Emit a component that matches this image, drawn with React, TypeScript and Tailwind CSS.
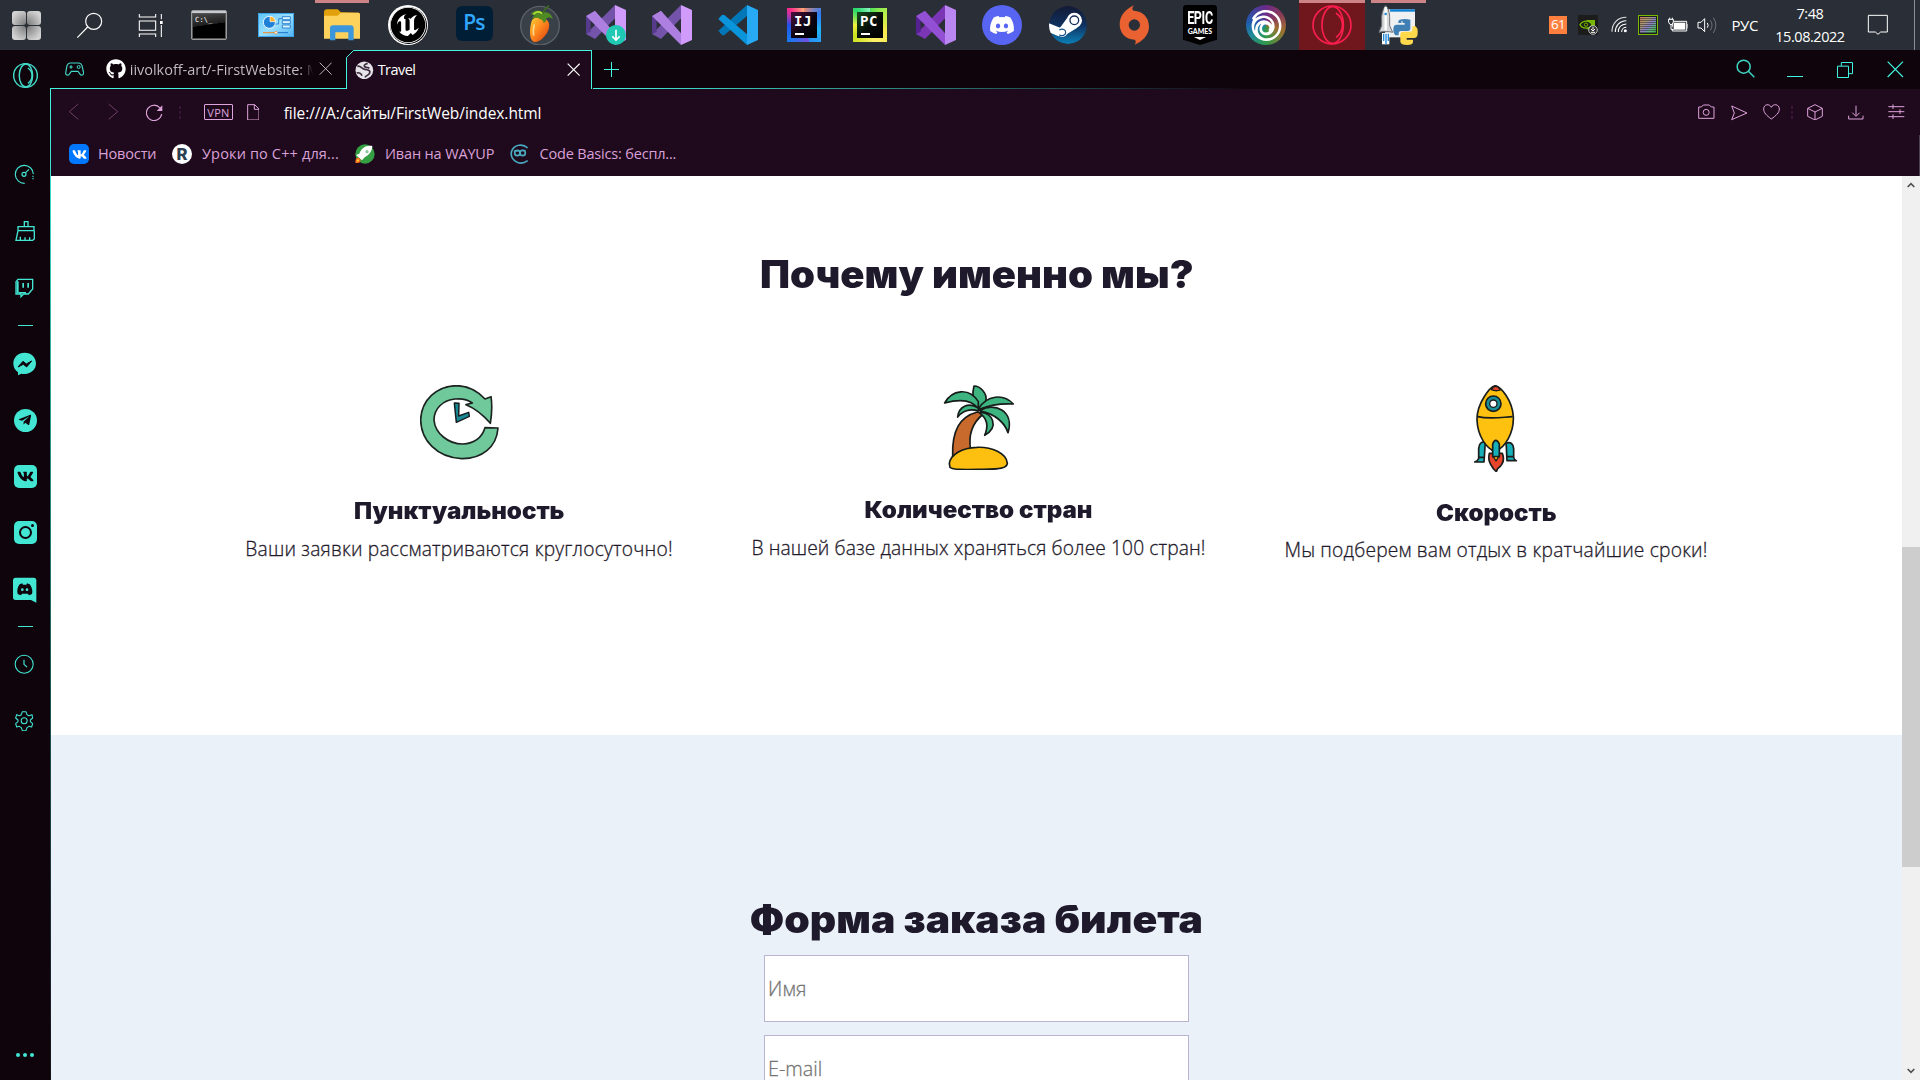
import React from 'react';
import { FaDiscord, FaGithub, FaVk, FaTelegramPlane } from 'react-icons/fa';
import { SiUnrealengine, SiUbisoft } from 'react-icons/si';

type DrawProps = { x: number; y: number; w: number; h: number; className?: string; children: React.ReactNode };

/** Line drawing on a grid of three units per pixel. */
function Draw({ x, y, w, h, className = '', children }: DrawProps) {
  return (
    <svg width={w / 3} height={h / 3} viewBox={`${x} ${y} ${w} ${h}`} fill="none" className={`shrink-0 ${className}`}>
      {children}
    </svg>
  );
}

function Cell({ className = '', children }: { className?: string; children: React.ReactNode }) {
  return <div className={`relative flex h-full w-[66px] shrink-0 items-center justify-center ${className}`}>{children}</div>;
}

function RunningBar({ className }: { className: string }) {
  return <span className={`absolute top-0 h-[3px] bg-[#cc8486] ${className}`} />;
}

function VisualStudio({ band, back, side, dark }: { band: string; back: string; side: string; dark: string }) {
  return (
    <Draw x={0} y={0} w={120} h={120}>
      <polygon points="0,87 27,102 87,40 87,0" fill={back} />
      <polygon points="0,33 14,42 14,80 0,87" fill={dark} />
      <polygon points="0,33 27,17 87,85 87,120" fill={band} />
      <polygon points="87,0 120,15 120,105 87,120" fill={side} />
    </Draw>
  );
}

function OperaGlyph({ size, color, width }: { size: number; color: string; width: number }) {
  return (
    <svg width={size} height={size} viewBox="0 0 120 120" fill="none" stroke={color} strokeWidth={width}>
      <circle cx="60" cy="60" r="57" />
      <ellipse cx="62" cy="60" rx="32" ry="55" />
      <path d="M72 24c26 18 26 54 0 74" />
    </svg>
  );
}

function JetBrains({ label, kind }: { label: string; kind: 'ij' | 'pc' }) {
  return (
    <div
      className={`flex h-[34px] w-[34px] p-[4px] ${
        kind === 'ij'
          ? 'bg-[conic-gradient(from_0deg,#f08a70,#2f7bf0_15%,#21b6f5_30%,#2a8cf5_45%,#7a4ce0_40%,#1a78f0_62%,#2350e8_75%,#fb2a8c_88%,#ffb07a)]'
          : 'bg-[conic-gradient(from_0deg,#4be05a,#b8f04a_15%,#f5ea4a_30%,#fdf06a_45%,#c9e020_65%,#f3f03c_75%,#25d86a_88%,#8af5c0)]'
      }`}
    >
      <div
        className={`flex flex-1 flex-col pl-[3px] pt-[1px] font-['DejaVu_Sans_Mono',monospace] text-[14px] font-bold leading-[16px] tracking-[0.6px] text-white ${
          kind === 'ij' ? 'bg-[linear-gradient(135deg,#4a0f3c,#0a0412_55%,#000)]' : 'bg-[linear-gradient(135deg,#174a1c,#060c06_55%,#000)]'
        }`}
      >
        <span>{label}</span>
        <span className="ml-px mt-[4px] h-[2px] w-[9px] bg-white" />
      </div>
    </div>
  );
}

function Taskbar() {
  return (
    <header className="flex h-[50px] w-full shrink-0 items-stretch bg-[#2a2f37] font-['Open_Sans',sans-serif] text-white">
      <Cell className="w-[53px]!">
        <div className="grid h-[29px] w-[29px] grid-cols-2 gap-px">
          <span className="rounded-[3px] bg-[radial-gradient(circle_at_100%_100%,#777_0%,#d2d2d2_80%)]" />
          <span className="rounded-[3px] bg-[radial-gradient(circle_at_0%_100%,#777_0%,#d2d2d2_80%)]" />
          <span className="rounded-[3px] bg-[radial-gradient(circle_at_100%_0%,#777_0%,#d2d2d2_80%)]" />
          <span className="rounded-[3px] bg-[radial-gradient(circle_at_0%_0%,#777_0%,#d2d2d2_80%)]" />
        </div>
      </Cell>
      <Cell className="w-[73px]!">
        <Draw x={228} y={33} w={81} h={81}>
          <g stroke="#fff" strokeWidth="3.5">
            <circle cx="281" cy="61" r="24" />
            <path d="M263 78 232 110" />
          </g>
        </Draw>
      </Cell>
      <Cell className="w-[50px]!">
        <Draw x={411} y={36} w={78} h={75}>
          <g stroke="#fff" strokeWidth="3.2">
            <path d="M415 39v9h49v-9M415 108v-9h49v9M415 60h49v28h-49zM481 39v16M481 72v36" />
            <path d="M477 60h8v9h-8z" fill="#fff" stroke="none" />
          </g>
        </Draw>
      </Cell>
      <Cell className="w-[67px]! pr-px">
        <div className="h-[30px] w-[36px] rounded-[2px] border border-[#9a9a9a] bg-[#c6cbd4] pt-[2px]">
          <div className="relative h-[26px] w-full overflow-hidden border border-[#555] bg-[linear-gradient(172deg,#4a4a4a,#1d1d1d_45%,#000_46%)]">
            <span className="absolute left-[2px] top-[2px] whitespace-nowrap font-['DejaVu_Sans_Mono',monospace] text-[7px] leading-[8px] tracking-[0.2px] text-white">C:\_</span>
          </div>
        </div>
      </Cell>
      <Cell>
        <Draw x={774} y={39} w={108} h={72}>
          <defs>
            <linearGradient id="panel" x1="0" y1="0" x2="1" y2="1">
              <stop stopColor="#5cc4f8" />
              <stop offset=".5" stopColor="#9be0ff" />
              <stop offset="1" stopColor="#4db2f2" />
            </linearGradient>
          </defs>
          <path d="M774 39h108v72H774z" fill="url(#panel)" />
          <path d="M775.500 40.500h105v69h-105z" stroke="#3aa5ea" strokeWidth="3" />
          <circle cx="808" cy="67" r="18" fill="#1d7fd6" stroke="#e8f8ff" strokeWidth="3" />
          <path d="M810 65V49a16 16 0 0 1 16 16z" fill="#ffb02e" stroke="#fff" strokeWidth="2" />
          <path d="M826 72h10V56h10" stroke="#1976c8" strokeWidth="2.500" />
          <g fill="#d8f3ff" stroke="#1976c8" strokeWidth="2.500">
            <path d="M847 50h24v9h-24zM847 62h24v9h-24zM847 75h24v9h-24z" />
          </g>
          <path d="M789 98h36" stroke="#f08a24" strokeWidth="3" />
          <path d="M832 98h32" stroke="#1976c8" strokeWidth="3" />
          <circle cx="828" cy="98" r="4" fill="#fff" stroke="#f08a24" strokeWidth="2" />
        </Draw>
      </Cell>
      <Cell>
        <RunningBar className="inset-x-[6px]" />
        <Draw x={972} y={26} w={108} h={95}>
          <path d="M972 36c0-6 3-9 9-9h32l10 9 52 1c4 0 5 3 5 6v20H972z" fill="#e2a10c" />
          <path d="M972 46h41l10-9h52c4 0 5 3 5 6v72H972z" fill="#fdd25c" />
          <path d="M990 120V84c0-6 3-9 9-9h53c6 0 9 3 9 9v36h-16V96h-39v24z" fill="#3c96dc" />
        </Draw>
      </Cell>
      <Cell>
        <div className="flex h-[40px] w-[40px] items-center justify-center rounded-full bg-white">
          <div className="flex h-[37px] w-[37px] items-center justify-center rounded-full bg-black">
            <SiUnrealengine size={36} />
          </div>
        </div>
      </Cell>
      <Cell>
        <div className="mb-[3px] flex h-[35px] w-[37px] items-center justify-center rounded-[6px] bg-[#001e36] pb-[2px] text-[21px] font-semibold leading-none tracking-[-0.8px] text-[#31a8ff]">Ps</div>
      </Cell>
      <Cell>
        <Draw x={120} y={14} w={120} h={122}>
          <defs>
            <linearGradient id="fruit" x1="0" y1="0" x2="1" y2="1">
              <stop stopColor="#ffd23a" />
              <stop offset=".45" stopColor="#ff8a1e" />
              <stop offset="1" stopColor="#d83a10" />
            </linearGradient>
          </defs>
          <circle cx="180" cy="76" r="58" fill="#3a4047" stroke="#5a6067" strokeWidth="4" />
          <path d="M157 58c14-14 44-8 50 12 4 22-20 54-43 55-20-3-15-52-7-67z" fill="url(#fruit)" />
          <path d="M163 72c-3 12-4 24-2 34" stroke="#fff2b0" strokeWidth="5" opacity=".7" />
          <path d="M152 43c8-14 26-16 36-6 16-4 28 5 30 19-10-6-14-5-20 0 2 6-1 10-7 12-1-7-5-11-12-12-6-6-16-4-22 0 2-6 3-9 8-11-5-3-8-3-13-2z" fill="#4f8a22" />
          <path d="M160 42c10-10 20-8 28-2" stroke="#b6e03a" strokeWidth="5" />
          <path d="M188 40c4-10 10-18 19-24" stroke="#3b6e1e" strokeWidth="5" />
        </Draw>
      </Cell>
      <Cell>
        <VisualStudio band="#ad7fe0" back="#7453ab" side="#d09bfb" dark="#563a8c" />
        <span className="absolute left-[33px] top-[25px] flex h-[20px] w-[20px] items-center justify-center rounded-full bg-[#20c9b4]">
          <Draw x={0} y={0} w={36} h={42}>
            <path d="M18 5v30M7 25l11 11 11-11" stroke="#fff" strokeWidth="5" />
          </Draw>
        </span>
      </Cell>
      <Cell><VisualStudio band="#ad7fe0" back="#7453ab" side="#d09bfb" dark="#563a8c" /></Cell>
      <Cell>
        <Draw x={714} y={15} w={120} h={120}>
          <path d="m715 92 10 12q4 3 9 0l67-56V15z" fill="#0177b8" />
          <path d="m715 57 10-11q4-3 9 0l67 57v32z" fill="#0a94dc" />
          <path d="m801 15 33 15v90l-33 15z" fill="#27aaf3" />
        </Draw>
      </Cell>
      <Cell><JetBrains label="IJ" kind="ij" /></Cell>
      <Cell><JetBrains label="PC" kind="pc" /></Cell>
      <Cell><VisualStudio band="#9450d4" back="#7a36b4" side="#ba86f2" dark="#552090" /></Cell>
      <Cell>
        <div className="flex h-[40px] w-[40px] items-center justify-center rounded-full bg-[#5865f2]">
          <FaDiscord size={26} />
        </div>
      </Cell>
      <Cell>
        <Draw x={267} y={18} w={114} h={114}>
          <defs>
            <linearGradient id="steam" x1="0" y1="0" x2="0" y2="1">
              <stop stopColor="#131a35" />
              <stop offset=".5" stopColor="#10305e" />
              <stop offset="1" stopColor="#0b80b8" />
            </linearGradient>
            <clipPath id="steamDisc"><circle cx="324" cy="75" r="57" /></clipPath>
          </defs>
          <g clipPath="url(#steamDisc)">
            <circle cx="324" cy="75" r="57" fill="url(#steam)" />
            <path d="M262 68l38 15 22-30 30 30-32 20-24 6-34-14z" fill="#fff" />
            <circle cx="343" cy="61" r="23" fill="#fff" />
            <circle cx="343" cy="61" r="13" stroke="#152c58" strokeWidth="4" />
            <circle cx="307" cy="96" r="15" fill="#fff" />
            <path d="M298 90c10-6 20 0 19 8s-11 12-19 6" stroke="#14508a" strokeWidth="3.500" />
          </g>
        </Draw>
      </Cell>
      <Cell>
        <Draw x={477} y={14} w={92} h={121}>
          <path d="M522 15c-6 7-7 13-1 16 27 1 46 20 46 48 0 26-20 44-43 54 4-6 5-11 0-15-27 0-45-20-45-46 0-27 19-46 43-57z" fill="#ea6232" />
          <circle cx="523" cy="74" r="17" fill="#2a2f37" />
        </Draw>
      </Cell>
      <Cell>
        <div className="flex h-[40px] w-[34px] flex-col items-center rounded-t-[3px] bg-black pt-[4px] [clip-path:polygon(0_0,100%_0,100%_87%,50%_100%,0_87%)]">
          <span className="block h-[18px] scale-y-[1.45] font-['Roboto',sans-serif] text-[12.500px] font-bold leading-[18px] tracking-[-0.3px]">EPIC</span>
          <span className="block font-['Lato',sans-serif] text-[7px] font-black leading-[9px]">GAMES</span>
          <span className="mt-px h-[3px] w-[12px] bg-white [clip-path:polygon(0_0,100%_0,50%_100%)]" />
        </div>
      </Cell>
      <Cell>
        <div className="flex h-[40px] w-[40px] items-center justify-center rounded-full bg-[conic-gradient(#6a2a8a,#8a3a5a_15%,#a07030_30%,#2f9a48_50%,#1f8a9a_65%,#1f5ab0_78%,#6a2a8a)]">
          <SiUbisoft size={31} />
        </div>
      </Cell>
      <Cell className="bg-[#6f171c]">
        <RunningBar className="inset-x-0" />
        <OperaGlyph size={40} color="#fa1e4e" width={5} />
      </Cell>
      <Cell>
        <RunningBar className="left-[6px] w-[55px]" />
        <Draw x={1254} y={14} w={120} h={122}>
          <path d="M1275 27h90v84h-90z" fill="#eef0f2" />
          <path d="M1290 27h75v7h-75z" fill="#0f7fd4" />
          <path d="m1257 96 8-20V48c2-16 7-27 12-32 6 5 11 16 12 32v28l9 20-10-2h-22z" fill="#d4d6d8" stroke="#6c7074" strokeWidth="3" />
          <path d="M1277 20v70" stroke="#fff" strokeWidth="7" />
          <circle cx="1277" cy="41" r="4" fill="#2f8ad8" />
          <path d="M1266 98h22v34h-22z" fill="#fff" />
          <path d="M1271 100v22M1278 100v32M1285 100v22" stroke="#1f88d8" strokeWidth="4" />
          <path d="M1319 58q16-4 32 0v28q0 6-8 6h-20q-7 0-7 8v5h-10q-8-8-5-26 2-6 9-6h24v-5h-19v-6z" fill="#3f7fb4" />
          <path d="M1357 78h10q9 8 5 28-2 7-10 7h-22v5h19v6q0 10-18 10t-20-10v-21q0-9 8-9h21q7 0 7-8z" fill="#fed94c" />
          <circle cx="1326" cy="65" r="2.500" fill="#fff" />
        </Draw>
      </Cell>

      <div className="ml-auto flex h-full w-[371px] items-center">
        <div className="flex h-[18px] w-[18px] items-center justify-center bg-[#ff7f3f] text-[13.500px] leading-none tracking-[-0.8px]">61</div>
        <Draw x={414} y={45} w={60} h={60} className="ml-[11px]">
          <path d="M414 45h60v60h-60z" fill="#1c1c1c" />
          <path d="M440 60h25v28h-25z" fill="#76b900" />
          <path d="M420 74c10-14 28-14 36 0-8 14-28 14-36 0z" fill="#1c1c1c" stroke="#76b900" strokeWidth="4" />
          <circle cx="438" cy="74" r="5" stroke="#76b900" strokeWidth="3" />
          <circle cx="459" cy="90" r="13" fill="#333" stroke="#bdbdbd" strokeWidth="3" />
          <path d="M459 81v8M453 87l6 6 6-6M453 97h12" stroke="#fff" strokeWidth="3" />
        </Draw>
        <Draw x={511} y={51} w={49} h={52} className="ml-[12.500px]">
          <g stroke="#fff" strokeWidth="3.200">
            <path d="M514 98c0-25 17-43 43-43" opacity=".85" />
            <path d="M524 99c0-19 12-33 33-34" />
            <path d="M533 99c0-14 9-23 24-24" />
            <path d="M543 99c0-8 6-14 14-14" />
          </g>
          <circle cx="554" cy="95" r="4.500" fill="#fff" />
        </Draw>
        <div className="ml-[11px] h-[20px] w-[20px] border border-[#7ab800] bg-black/40 p-px">
          <div className="h-full w-full bg-[repeating-linear-gradient(#0000_0_1px,#2228_1px_2px),linear-gradient(135deg,#d07a60,#b09a70_30%,#8a80c8_55%,#5ac070_80%,#3fa040)]" />
        </div>
        <Draw x={683} y={51} w={62} h={48} className="ml-[10px]">
          <path d="M696 64h43v29h-43zM743 72v13" stroke="#fff" strokeWidth="3" />
          <path d="M700 68h35v21h-35z" fill="#fff" />
          <path d="M684 58h15v8q-2 8-7 8t-7-8zM688 53v6M696 53v6M692 72v16h8" stroke="#fff" strokeWidth="3" fill="#2a2f37" />
        </Draw>
        <Draw x={772} y={48} w={66} h={54} className="ml-[9px]">
          <path d="M775 67h9l11-11v39l-11-11h-9zM803 69q5 7 0 14" stroke="#fff" strokeWidth="3" />
          <path d="M812 61q10 14 0 30M821 53q15 22 0 46" stroke="#6e737a" strokeWidth="3" />
        </Draw>
        <span className="ml-[12px] w-[30px] text-[15px] leading-none tracking-[-0.400px]">РУС</span>
        <div className="ml-[9px] flex w-[79px] flex-col items-center text-[14.500px] leading-[23px] tracking-[-0.450px]">
          <span>7:48</span>
          <span>15.08.2022</span>
        </div>
        <Draw x={1284} y={42} w={66} h={66} className="ml-[18px]">
          <path d="M1288 46h57v50h-20l-8 7-8-7h-21z" stroke="#fff" strokeWidth="3" />
        </Draw>
        <span className="ml-auto mr-[5px] h-full w-px bg-[#8b8f95]" />
      </div>
    </header>
  );
}

function SideCell({ className = 'h-[56px]', children }: { className?: string; children: React.ReactNode }) {
  return <div className={`flex w-full shrink-0 items-center justify-center ${className}`}>{children}</div>;
}

function Sidebar() {
  return (
    <aside className="flex w-[50px] shrink-0 flex-col items-center bg-[#0f040c] text-[#42e6d3]">
      <SideCell className="mb-[46px] h-[50px] pl-px pt-px">
        <OperaGlyph size={25} color="#42d9c8" width={7} />
      </SideCell>
      <SideCell className="h-[56px] pr-px">
        <Draw x={43} y={43} w={62} h={62}>
          <g stroke="currentColor" strokeWidth="3.500">
            <path d="M75 101a27 27 0 1 1 26-28" />
            <path d="M100 78v12" strokeDasharray="4 3" />
            <circle cx="73" cy="74" r="6" />
            <path d="m78 69 10-10" />
          </g>
        </Draw>
      </SideCell>
      <SideCell className="h-[56px] pt-[2px]">
        <Draw x={45} y={210} w={62} h={66}>
          <path d="M73 230v-15h11v15M54 230h48v12H54zM54 242l-6 29h50l5-4v-25M61 260v11M75 262v9M89 262v9" stroke="currentColor" strokeWidth="4" />
        </Draw>
      </SideCell>
      <SideCell className="h-[58px] pt-px">
        <Draw x={47} y={382} w={58} h={60}>
          <path d="M56 386h44v29l-13 15H73l-8 8v-8H50v-37z" stroke="currentColor" strokeWidth="4" />
          <path d="M52 392h6v36h-6zM69 397h5v14h-5zM84 397h5v14h-5z" fill="currentColor" />
          <path d="M58 424h22v5H58z" fill="currentColor" />
        </Draw>
      </SideCell>
      <span className="mt-[9px] h-px w-[15px] bg-[#42e6d3]" />
      <SideCell className="mt-[10px] h-[56px]">
        <Draw x={40} y={606} w={70} h={70}>
          <path d="M75 608c20 0 34 14 34 32s-14 32-34 32c-4 0-7 0-10-1l-10 5v-9c-9-6-14-16-14-27 0-18 14-32 34-32z" fill="currentColor" />
          <path d="m55 651 15-17 10 8 16-9-15 18-10-8z" fill="#0f040c" stroke="#0f040c" strokeWidth="3" />
        </Draw>
      </SideCell>
      <SideCell className="h-[56px]">
        <div className="flex h-[23px] w-[23px] items-center justify-center rounded-full bg-[#42e6d3]">
          <FaTelegramPlane size={14} color="#0f040c" />
        </div>
      </SideCell>
      <SideCell className="h-[56px]">
        <div className="flex h-[23px] w-[23px] items-center justify-center rounded-[5px] bg-[#42e6d3]">
          <FaVk size={17} color="#0f040c" />
        </div>
      </SideCell>
      <SideCell className="h-[56px]">
        <div className="relative flex h-[23px] w-[23px] items-center justify-center rounded-[5px] bg-[#42e6d3]">
          <span className="h-[13px] w-[13px] rounded-full border-[2.500px] border-[#0f040c]" />
          <span className="absolute right-[3px] top-[3px] h-[3px] w-[3px] rounded-full bg-[#0f040c]" />
        </div>
      </SideCell>
      <SideCell className="h-[60px]">
        <Draw x={40} y={291} w={72} h={78}>
          <path d="M48 293h54q8 0 8 8v67l-16-8H48q-8 0-8-8v-51q0-8 8-8z" fill="currentColor" />
          <path d="M54 342c-3-10 0-22 6-29l8-3 2 4h10l2-4 8 3c6 7 10 19 7 29l-9 4-4-5H68l-5 5z" fill="#0f040c" />
          <circle cx="68" cy="329" r="4" fill="currentColor" />
          <circle cx="82" cy="329" r="4" fill="currentColor" />
        </Draw>
      </SideCell>
      <span className="mt-[6px] h-px w-[15px] bg-[#42e6d3]" />
      <SideCell className="mt-[9px] h-[56px] pr-px pt-px">
        <Draw x={43} y={523} w={62} h={62}>
          <circle cx="73.500" cy="554" r="27" stroke="currentColor" strokeWidth="3.200" />
          <path d="M73 540v14l9 8" stroke="currentColor" strokeWidth="3.500" />
        </Draw>
      </SideCell>
      <SideCell className="h-[56px] pr-px pt-[2px]">
        <Draw x={46} y={692} w={56} h={60}>
          <g stroke="currentColor" strokeWidth="3.200" strokeLinejoin="round">
            <path d="M68 694h11l3 9 6 3 9-3 2 10-7 6v5l7 6-3 10-8-2-6 4-3 9H68l-3-9-6-4-8 2-3-10 7-6v-5l-7-6 3-10 8 3 6-3z" />
            <circle cx="73.500" cy="721" r="9" />
          </g>
        </Draw>
      </SideCell>
      <div className="mb-[23px] mt-auto flex gap-[3px]">
        <span className="h-1 w-1 rounded-full bg-[#42e6d3]" />
        <span className="h-1 w-1 rounded-full bg-[#42e6d3]" />
        <span className="h-1 w-1 rounded-full bg-[#42e6d3]" />
      </div>
    </aside>
  );
}

function TabBar() {
  return (
    <div className="flex h-[39px] shrink-0 items-stretch bg-[#0f040c] font-['Open_Sans',sans-serif] text-[14.500px] text-[#42f5e0]">
      <div className="flex w-[295px] shrink-0 items-center border-b border-[#42f5e0] pl-[14px]">
        <Draw x={193} y={186} w={58} h={42} className="text-[#42d9c8]">
          <path d="M208 189h27q7 1 9 8l5 22q-1 8-9 6l-8-11h-20l-8 11q-9 2-9-6l4-22q2-7 9-8z" stroke="currentColor" strokeWidth="3.500" />
          <path d="M211 196v10M206 201h10" stroke="currentColor" strokeWidth="3.500" />
          <circle cx="234" cy="201" r="4.500" stroke="currentColor" strokeWidth="3" />
        </Draw>
        <FaGithub size={20} color="#fff" className="ml-[21.500px] shrink-0" />
        <span className="ml-[4px] mt-px w-[191px] shrink-0 whitespace-nowrap bg-linear-to-r from-[#c4c0c3] from-89% to-transparent to-96% bg-clip-text tracking-[-0.030px] text-transparent">iivolkoff-art/-FirstWebsite: M</span>
        <Draw x={957} y={189} w={40} h={40} className="ml-[-2px]">
          <path d="m959 191 36 36m0-36-36 36" stroke="#b9b4b8" strokeWidth="3" />
        </Draw>
      </div>
      <div className="relative flex w-[246px] shrink-0 items-center border-x border-t border-[#42f5e0] bg-[#1e0a1c] pl-[8px]">
        <Draw x={1038} y={150} w={24} h={24} className="absolute left-[-1px] top-[-1px]">
          <path d="M1038 150h24l-24 24z" fill="#0f040c" />
          <path d="m1039 173 22-22" stroke="#42f5e0" strokeWidth="3" />
        </Draw>
        <Draw x={1064} y={180} w={56} h={56}>
          <circle cx="1092" cy="208" r="26.500" fill="#e6e4e8" />
          <path d="M1071 196c10-3 13 8 22 9s18 3 15 11-10 6-14 13" stroke="#3a2a3c" strokeWidth="5" />
          <path d="M1102 187c-7 2-13 6-9 10s10 1 14 5M1069 216c7-2 14 1 16 8" stroke="#3a2a3c" strokeWidth="5" />
        </Draw>
        <span className="ml-[4px] tracking-[-0.550px] text-white">Travel</span>
        <Draw x={261} y={189} w={40} h={40} className="ml-auto mr-[11px]">
          <path d="m263 191 36 36m0-36-36 36" stroke="#fff" strokeWidth="3.500" />
        </Draw>
      </div>
      <div className="relative flex flex-1 items-center">
        <span className="absolute bottom-0 left-px h-px w-[660px] bg-linear-to-r from-[#42f5e0] to-transparent" />
        <Draw x={372} y={183} w={45} h={45} className="mb-px ml-[12px]">
          <path d="M394.500 183v45M372 205.500h45" stroke="currentColor" strokeWidth="3" />
        </Draw>
        <Draw x={886} y={176} w={58} h={58} className="mb-[2px] ml-auto">
          <circle cx="909" cy="199" r="19.500" stroke="#3fd6c4" strokeWidth="4.500" />
          <path d="m923 213 18 18" stroke="#3fd6c4" strokeWidth="4.500" />
        </Draw>
        <span className="ml-[32px] mt-[14px] h-px w-[16px] bg-[#42f5e0]" />
        <Draw x={1191} y={183} w={48} h={48} className="ml-[34px]">
          <path d="M1192.500 195.500h33v34h-33zM1204 195v-10.500h33.500v33.500H1226" stroke="currentColor" strokeWidth="3" />
        </Draw>
        <Draw x={1340} y={182} w={50} h={50} className="ml-[33.500px] mr-[16.500px]">
          <path d="m1342 184 46 46m0-46-46 46" stroke="currentColor" strokeWidth="3.500" />
        </Draw>
      </div>
    </div>
  );
}

function DotColumn({ className = '' }: { className?: string }) {
  return (
    <span className={`flex flex-col gap-[2px] ${className}`}>
      <i className="h-[3px] w-[2px] bg-[#3a1538]" />
      <i className="h-[3px] w-[2px] bg-[#3a1538]" />
      <i className="h-[3px] w-[2px] bg-[#3a1538]" />
    </span>
  );
}

function AddressBar() {
  return (
    <div className="flex h-[46px] items-center pl-[17px] font-['Open_Sans',sans-serif] text-[#dfa3dc]">
      <Draw x={204} y={312} w={33} h={52}>
        <path d="m235 315-27 23 27 23" stroke="#6d3f69" strokeWidth="3" />
      </Draw>
      <Draw x={324} y={312} w={33} h={52} className="ml-[29px]">
        <path d="m326 315 27 23-27 23" stroke="#6d3f69" strokeWidth="3" />
      </Draw>
      <Draw x={437} y={310} w={51} h={51} className="ml-[26.500px]">
        <path d="M479 322a23 23 0 1 0 5 18" stroke="currentColor" strokeWidth="3.500" />
        <path d="M486 314v17h-17z" fill="currentColor" />
      </Draw>
      <DotColumn className="ml-[16.500px]" />
      <span className="ml-[23px] flex h-[16px] w-[29px] items-center justify-center rounded-[1px] border border-[#dfa3dc] text-[11px] leading-none tracking-[0.3px]">VPN</span>
      <Draw x={740} y={311} w={38} h={50} className="ml-[13.500px]">
        <path d="M742 313h21l13 13v33h-34zM762 313v14h14" stroke="currentColor" strokeWidth="3" />
      </Draw>
      <span className="ml-[24.500px] mt-[3px] text-[15.500px] leading-none tracking-[-0.050px] text-white">file:///A:/сайты/FirstWeb/index.html</span>

      <div className="ml-auto mr-[15px] flex items-center">
        <Draw x={773} y={313} w={50} h={46}>
          <path d="M775 322h8l6-6h18l6 6h8v34h-46z" stroke="currentColor" strokeWidth="3" strokeLinejoin="round" />
          <circle cx="797.500" cy="338" r="9" stroke="currentColor" strokeWidth="3" />
        </Draw>
        <Draw x={872} y={315} w={51} h={47} className="ml-[16px] mt-[2px]">
          <path d="m874 318 46 21-46 20 8-20z" stroke="currentColor" strokeWidth="3" strokeLinejoin="round" />
        </Draw>
        <Draw x={968} y={311} w={51} h={48} className="ml-[15px]">
          <path d="M993 356c-14-10-23-19-23-30 0-15 18-17 23-5 5-12 24-10 24 5 0 11-10 20-24 30z" stroke="currentColor" strokeWidth="3" strokeLinejoin="round" />
        </Draw>
        <DotColumn className="ml-[11px]" />
        <Draw x={1102} y={311} w={49} h={50} className="ml-[14.500px]">
          <path d="m1126 313 22 11v24l-22 11-22-11v-24zM1104 324l22 11 22-11M1126 335v24" stroke="currentColor" strokeWidth="3" strokeLinejoin="round" />
        </Draw>
        <Draw x={1223} y={314} w={48} h={45} className="ml-[25px]">
          <path d="M1247 316v30M1236 337l11 11 11-11M1225 346v10h43v-10" stroke="currentColor" strokeWidth="3" />
        </Draw>
        <Draw x={1343} y={311} w={50} h={47} className="ml-[24px]">
          <path d="M1344 319h48M1344 334h48M1344 349h48M1358 312v14M1379 327v14M1358 342v14" stroke="currentColor" strokeWidth="3" />
        </Draw>
      </div>
    </div>
  );
}

function Bookmarks() {
  return (
    <div className="flex h-[41px] items-center whitespace-nowrap border-r border-[#4c404c] pb-[3px] pl-[18px] font-['Open_Sans',sans-serif] text-[14.500px] leading-none text-[#dba0d9]">
      <span className="flex h-[20px] w-[20px] items-center justify-center rounded-[5px] bg-[#0077ff] text-white"><FaVk size={15} /></span>
      <span className="ml-[9px] w-[59px] tracking-[-0.150px]">Новости</span>
      <span className="ml-[15px] flex h-[20px] w-[20px] items-center justify-center rounded-full bg-white font-['Roboto',sans-serif] text-[17px] font-black text-[#2c3e50]">R</span>
      <span className="ml-[10px] w-[137px] tracking-[0.150px]">Уроки по C++ для...</span>
      <Draw x={1065} y={431} w={60} h={60} className="ml-[16px]">
        <circle cx="1095" cy="461" r="29" fill="#35a043" />
        <path d="M1117 437c-20-3-33 7-39 23l-10 4 9 8 9 8 8-9c14-8 22-18 23-34z" fill="#fff" />
        <circle cx="1101" cy="454" r="5" fill="#8fc7a0" />
        <path d="M1066 488c-1-11 4-17 12-15 5 4 5 11-1 15z" fill="#f26a1b" />
        <path d="M1070 484c0-6 3-9 7-7 1 4-1 7-7 7z" fill="#ffd23a" />
      </Draw>
      <span className="ml-[10px] w-[111px] tracking-[-0.150px]">Иван на WAYUP</span>
      <Draw x={92} y={431} w={57} h={62} className="ml-[14px]">
        <g stroke="#4aa9c0" strokeWidth="5">
          <path d="M145 443c-14-14-40-11-48 9-7 25 22 48 48 29" />
          <circle cx="114" cy="458" r="8" />
          <circle cx="130" cy="458" r="8" />
          <path d="M103 452h14M127 450h12" strokeWidth="3" />
        </g>
      </Draw>
      <span className="ml-[10.500px] tracking-[-0.180px]">Code Basics: беспл...</span>
    </div>
  );
}

function ClockPicture() {
  return (
    <Draw x={600} y={75} w={240} h={225}>
      <path d="M795 203l39 1c-4 58-49 93-109 92-75-3-122-56-123-116 2-60 48-102 108-103 35 1 65 18 85 40l18-7c4 25 2 55-2 80-21-25-46-45-73-56l19-5c-12-9-32-14-52-12-35 3-63 28-63 63 3 40 43 72 86 72 32-2 57-17 67-49z" fill="#6fc99a" stroke="#1c2422" strokeWidth="5" strokeLinejoin="round" />
      <path d="M703 129l14 1-1 38 30-11 2 12-39 18z" fill="#168b96" stroke="#151d20" strokeWidth="4.500" strokeLinejoin="round" />
    </Draw>
  );
}

function PalmPicture() {
  return (
    <Draw x={669} y={465} w={216} h={255}>
      <g stroke="#161c1a" strokeWidth="5" strokeLinejoin="round">
        <path d="M772 546c-52 14-77 54-74 134l54-20c-7-40 3-80 38-108z" fill="#c96a2d" />
        <path d="M688 700c4-25 37-47 82-48 45-2 90 18 92 48-2 15-22 17-72 18-60 1-90 2-100-6z" fill="#fdc010" />
        <g fill="#3eb480">
          <path d="M775 540c-15-20-20-50-13-72 18 0 42 22 35 47-5 13-14 20-19 27z" />
          <path d="M775 538c-20-33-60-30-101-19 21-39 73-49 101-4z" />
          <path d="M775 543c-25-8-48 0-62 18 3-31 32-46 62-27z" />
          <path d="M776 536c24-41 74-46 104-14-35-2-70 3-100 15z" />
          <path d="M782 547c33 0 58 42 12 69 11-26 11-48-14-66z" />
          <path d="M782 541c38-26 103 1 82 67-9-28-39-58-82-64z" />
        </g>
      </g>
    </Draw>
  );
}

function RocketPicture() {
  return (
    <Draw x={642} y={75} w={132} h={261}>
      <g stroke="#1a1d1c" strokeWidth="5" strokeLinejoin="round">
        <path d="M676 246c-14-2-19 8-20 20v30q-4 8-12 10h28l3-46zM738 250c14-6 22 2 23 16v26q2 8 8 10h-28l-2-42z" fill="#18b0b8" />
        <path d="M655 292h18M740 290h20" />
        <path d="M688 280c-6 24 6 36 13 47l8 8 4-9c16-12 22-26 14-46z" fill="#e8452a" />
        <path d="M706 77c-16 3-56 53-55 103 2 50 29 85 54 95 30-13 57-55 55-105-3-50-38-90-54-93z" fill="#fec110" />
        <path d="M694 89c8-13 18-14 27 1-8 3-18 3-27-1z" fill="#e8452a" strokeWidth="4" />
        <circle cx="700" cy="131" r="23" fill="#198f9a" />
        <circle cx="700" cy="131" r="11" fill="#fff" strokeWidth="4" />
        <path d="M653 170c36 8 70 2 105 0" />
        <path d="M698 290v-38q9-22 20 0v38z" fill="#18b0b8" />
        <path d="M700 290h16l-8 13z" fill="#fec110" strokeWidth="4" />
      </g>
    </Draw>
  );
}

type FeatureProps = { picture: React.ReactNode; title: string; text: string; width: string; slot: string; body: string };

function Feature({ picture, title, text, width, slot, body }: FeatureProps) {
  return (
    <article className={`flex shrink-0 flex-col items-center whitespace-nowrap ${width}`}>
      <div className={slot}>{picture}</div>
      <h3 className="scale-x-[1.07] font-['Inter',sans-serif] text-[22.500px] font-black leading-[28px]">{title}</h3>
      <p className={`font-['Open_Sans',sans-serif] text-[19.200px] font-light leading-[28px] [-webkit-text-stroke:0.3px_#1f1a2b] ${body}`}>{text}</p>
    </article>
  );
}

function Page() {
  return (
    <main className="flex min-w-0 flex-1 flex-col overflow-hidden text-[#1f1a2b]">
      <section className="flex h-[559px] shrink-0 flex-col items-center bg-white pt-[74px]">
        <h2 className="scale-x-[1.053] font-['Inter',sans-serif] text-[38px] font-black leading-[48px]">Почему именно мы?</h2>
        <div className="mt-[87px] flex items-start justify-center gap-[80px]">
          <Feature picture={<ClockPicture />} title="Пунктуальность" text="Ваши заявки рассматриваются круглосуточно!" width="w-[426px]" slot="h-[112px] pl-px" body="mt-[10px] tracking-[0.200px]" />
          <Feature picture={<PalmPicture />} title="Количество стран" text="В нашей базе данных храняться более 100 стран!" width="w-[453px]" slot="h-[111px]" body="mt-[10px] tracking-[0.110px]" />
          <Feature picture={<RocketPicture />} title="Скорость" text="Мы подберем вам отдых в кратчайшие сроки!" width="w-[422px]" slot="h-[114px]" body="mt-[9px] tracking-[0.190px]" />
        </div>
      </section>
      <section className="flex flex-1 flex-col items-center bg-[#eaf1f8] pt-[160px]">
        <h2 className="shrink-0 scale-x-[1.077] font-['Inter',sans-serif] text-[38px] font-black leading-[48px]">Форма заказа билета</h2>
        <form className="mt-[12px] flex w-[425px] shrink-0 flex-col gap-[13px] font-['Open_Sans',sans-serif] text-[19.800px] font-light">
          <input placeholder="Имя" className="h-[67px] w-full shrink-0 border border-[#bbb4d0] bg-white px-[3px] tracking-[0.200px] [-webkit-text-stroke:0.3px_#757575] placeholder:text-[#757575]" />
          <input placeholder="E-mail" className="h-[67px] w-full shrink-0 border border-[#bbb4d0] bg-white px-[3px] [-webkit-text-stroke:0.3px_#757575] placeholder:text-[#757575]" />
        </form>
      </section>
    </main>
  );
}

function Scrollbar() {
  return (
    <div className="flex w-[18px] shrink-0 flex-col items-center bg-[#f0f0f0]">
      <Draw x={0} y={0} w={24} h={18} className="mt-[6px]">
        <path d="m2 15 10-10 10 10" stroke="#505050" strokeWidth="5" />
      </Draw>
      <div className="mt-[359px] h-[320px] w-full bg-[#cdcdcd]" />
      <Draw x={0} y={0} w={24} h={18} className="mb-[6px] mt-auto">
        <path d="m2 3 10 10 10-10" stroke="#505050" strokeWidth="5" />
      </Draw>
    </div>
  );
}

export default function App() {
  return (
    <div className="flex h-[1080px] w-[1920px] flex-col overflow-hidden bg-[#0f040c]">
      <Taskbar />
      <div className="flex min-h-0 flex-1">
        <Sidebar />
        <div className="flex w-px shrink-0 flex-col">
          <div className="mt-[38px] h-[600px] bg-linear-to-b from-[#42f5e0] to-[#1b5a57]" />
          <div className="flex-1 bg-linear-to-b from-[#1b5a57] to-[#15131a]" />
        </div>
        <div className="flex min-w-0 flex-1 flex-col">
          <TabBar />
          <div className="shrink-0 bg-[#1e0a1c]">
            <AddressBar />
            <Bookmarks />
          </div>
          <div className="flex min-h-0 flex-1">
            <Page />
            <Scrollbar />
          </div>
        </div>
      </div>
    </div>
  );
}
